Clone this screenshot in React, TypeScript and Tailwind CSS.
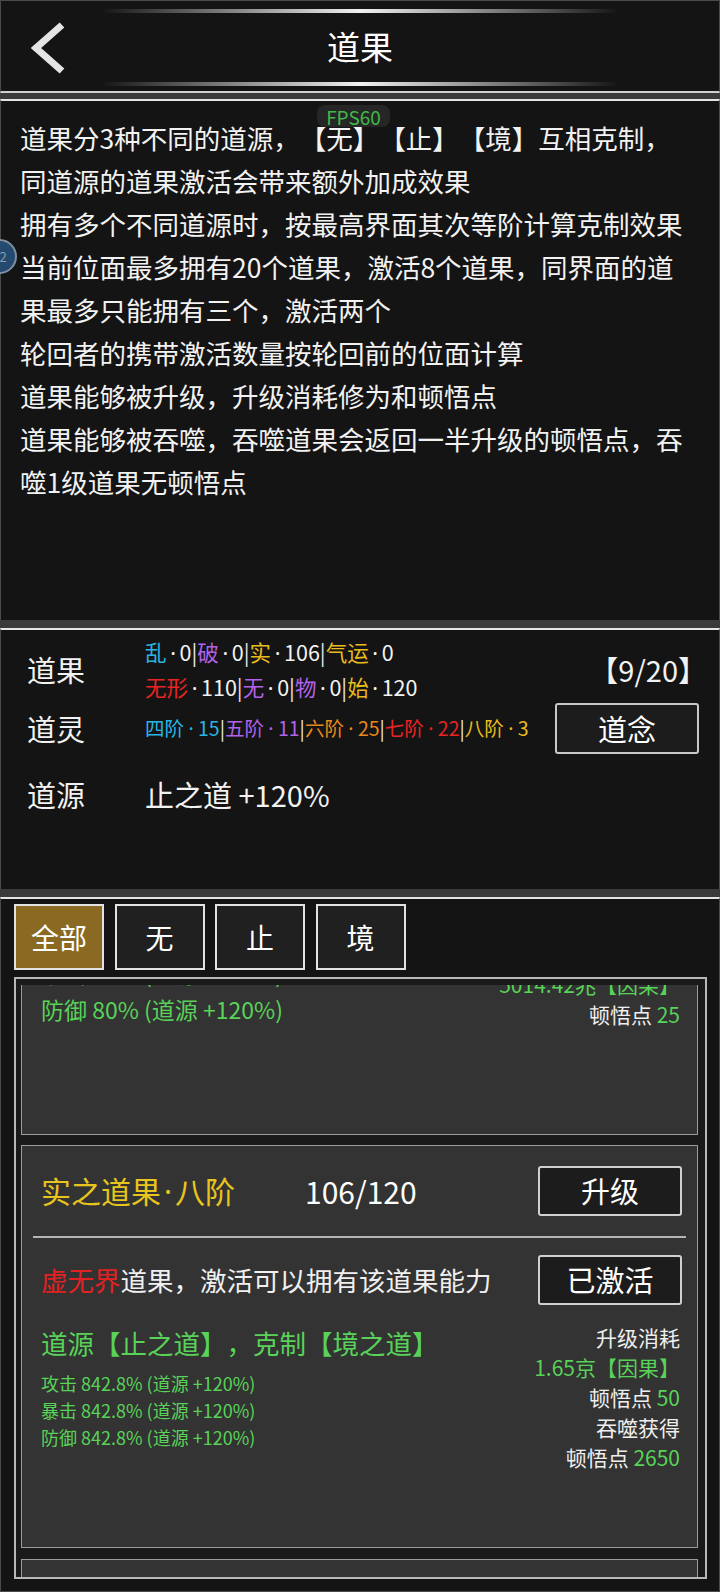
import React from 'react';

const CYAN = 'text-[#2ab4e4]';
const PURPLE = 'text-[#b262ea]';
const GOLD = 'text-[#e8bc1e]';
const RED = 'text-[#e82424]';
const ORANGE = 'text-[#e8891c]';
const GREEN = 'text-[#58d258]';

function Sep() {
  return <span className="text-[#e8e8e8]">|</span>;
}

// narrow middle dot, taken from the latin font (the CJK one draws it full width)
function Dot({ w = 'w-[13px]' }: { w?: string }) {
  return <span className={"inline-block text-center font-['Noto_Sans',sans-serif] " + w}>·</span>;
}

function Header() {
  return (
    <div className="relative h-[93px] bg-[#141414] border border-[#4a4a4a] border-b-2 border-b-[#d0d0d0] flex items-center justify-center">
      {/* top & bottom glow lines */}
      <div className="absolute left-[100px] top-[8px] w-[518px] h-[4px] bg-linear-to-r from-transparent via-[#f2f2f2] to-transparent" />
      <div className="absolute left-[100px] top-[81px] w-[518px] h-[4px] bg-linear-to-r from-transparent via-[#f2f2f2] to-transparent" />
      <svg className="absolute left-[28px] top-[21px]" width="40" height="52" viewBox="0 0 40 52">
        <polyline points="33,3 7,26 33,49" fill="none" stroke="#e4e4e4" strokeWidth="7" />
      </svg>
      <div className="text-[33px] leading-none text-white">道果</div>
    </div>
  );
}

function Description() {
  const lines = [
    '道果分3种不同的道源，【无】【止】【境】互相克制，',
    '同道源的道果激活会带来额外加成效果',
    '拥有多个不同道源时，按最高界面其次等阶计算克制效果',
    '当前位面最多拥有20个道果，激活8个道果，同界面的道',
    '果最多只能拥有三个，激活两个',
    '轮回者的携带激活数量按轮回前的位面计算',
    '道果能够被升级，升级消耗修为和顿悟点',
    '道果能够被吞噬，吞噬道果会返回一半升级的顿悟点，吞',
    '噬1级道果无顿悟点',
  ];
  return (
    <div className="mt-[6px] h-[521px] bg-[#141414] border-x border-[#4a4a4a] border-t-2 border-t-[#e4e4e4] pl-[19px] pt-[15px] text-[26.5px] leading-[43px] text-[#f2f2f2]">
      {lines.map((l, i) => (
        <div key={i} className="whitespace-nowrap">
          {l}
        </div>
      ))}
    </div>
  );
}

function Stats() {
  return (
    <div className="mt-[8px] h-[261px] bg-[#141414] border-x border-[#4a4a4a] border-t-2 border-t-[#e4e4e4] pl-[26px] pr-[20px] pt-[6px] text-[#f2f2f2]">
      <div className="h-[67px] flex items-center">
        <div className="w-[118px] text-[29px]">道果</div>
        <div className="flex-1 text-[21.5px] leading-[33.5px] whitespace-nowrap">
          <div>
            <span className={CYAN}>乱</span><Dot />0<Sep />
            <span className={PURPLE}>破</span><Dot />0<Sep />
            <span className={GOLD}>实</span><Dot />106<Sep />
            <span className={GOLD}>气运</span><Dot />0
          </div>
          <div>
            <span className={RED}>无形</span><Dot />110<Sep />
            <span className={PURPLE}>无</span><Dot />0<Sep />
            <span className={PURPLE}>物</span><Dot />0<Sep />
            <span className={GOLD}>始</span><Dot />120
          </div>
        </div>
        <div className="text-[29px] -mr-[8px]">【9/20】</div>
      </div>
      <div className="h-[51px] flex items-center">
        <div className="w-[118px] text-[29px]">道灵</div>
        <div className="flex-1 text-[19.5px] whitespace-nowrap">
          <span className={CYAN}>四阶<Dot w="w-[14px]" />15</span>
          <Sep />
          <span className={PURPLE}>五阶<Dot w="w-[14px]" />11</span>
          <Sep />
          <span className={ORANGE}>六阶<Dot w="w-[14px]" />25</span>
          <Sep />
          <span className={RED}>七阶<Dot w="w-[14px]" />22</span>
          <Sep />
          <span className={GOLD}>八阶<Dot w="w-[14px]" />3</span>
        </div>
        <button className="w-[144px] h-[51px] bg-[#1c1c1c] border-2 border-[#c8c8c8] rounded-[3px] text-[29px] text-white">
          道念
        </button>
      </div>
      <div className="mt-[21px] h-[40px] flex items-center">
        <div className="w-[118px] text-[29px]">道源</div>
        <div className="text-[29px]">止之道 +120%</div>
      </div>
    </div>
  );
}

function Tab({ label, active }: { label: string; active?: boolean }) {
  return (
    <div
      className={
        'w-[90px] h-[66px] border-2 border-[#e2e2e2] flex items-center justify-center text-[28px] text-white ' +
        (active ? 'bg-[#8a6a22]' : 'bg-[#202020]')
      }
    >
      {label}
    </div>
  );
}

function Btn({ children }: { children: React.ReactNode }) {
  return (
    <div className="w-[144px] h-[50px] bg-[#1c1c1c] border-2 border-[#d0d0d0] rounded-[3px] flex items-center justify-center text-[29px] text-white">
      {children}
    </div>
  );
}

function DaoList() {
  return (
    <div className="mt-[8px] h-[695px] bg-[#141414] border-x border-b border-[#4a4a4a] border-t-2 border-t-[#e4e4e4] pt-[5px]">
      <div className="flex gap-[10.5px] pl-[13px]">
        <Tab label="全部" active />
        <Tab label="无" />
        <Tab label="止" />
        <Tab label="境" />
      </div>
      <div className="mt-[7px] ml-[13px] w-[693px] h-[602px] border-2 border-[#b8b8b8] bg-[#1a1a1a] pt-[6px] pl-[5px] pr-[7px] overflow-hidden flex flex-col">
        {/* scrolled card, top part out of view */}
        <div className="h-[150px] shrink-0 bg-[#333333] border-x border-b border-[#9c9c9c] overflow-hidden flex justify-between items-start pl-[19px] pr-[17px]">
          <div className={GREEN + ' text-[23px] leading-[36px] -mt-[30px]'}>
            <div>暴击 80% (道源 +120%)</div>
            <div>防御 80% (道源 +120%)</div>
          </div>
          <div className="text-right text-[21px] leading-[30px] text-[#eeeeee] -mt-[16px]">
            <div className={GREEN}>5014.42兆【因果】</div>
            <div>
              顿悟点 <span className={GREEN}>25</span>
            </div>
          </div>
        </div>

        <div className="mt-[10px] h-[403px] shrink-0 bg-[#333333] border border-[#9c9c9c]">
          <div className="mt-[20px] h-[50px] flex items-center justify-between pl-[19px] pr-[15px]">
            <div className="flex items-center">
              <div className="w-[264px] text-[30px] text-[#e8c41e] whitespace-nowrap">
                实之道果<Dot w="w-[14px]" />八阶
              </div>
              <div className="text-[30px] text-white">106/120</div>
            </div>
            <Btn>升级</Btn>
          </div>
          <div className="mt-[20px] mx-[11px] h-[2px] bg-[#b4b4b4]" />
          <div className="mt-[17px] h-[50px] flex items-center justify-between pl-[19px] pr-[15px]">
            <div className="text-[26.5px] text-[#f0f0f0]">
              <span className="text-[#e02222]">虚无界</span>道果，激活可以拥有该道果能力
            </div>
            <Btn>已激活</Btn>
          </div>
          <div className="mt-[17px] flex justify-between items-start pl-[19px] pr-[17px]">
            <div className={GREEN}>
              <div className="mt-[3px] text-[26.5px] leading-[36px] whitespace-nowrap">道源【止之道】，克制【境之道】</div>
              <div className="mt-[8.5px] text-[18px] leading-[27px]">
                <div>攻击 842.8% (道源 +120%)</div>
                <div>暴击 842.8% (道源 +120%)</div>
                <div>防御 842.8% (道源 +120%)</div>
              </div>
            </div>
            <div className="text-right text-[21px] leading-[30px] text-[#eeeeee]">
              <div>升级消耗</div>
              <div className={GREEN}>1.65京【因果】</div>
              <div>
                顿悟点 <span className={GREEN}>50</span>
              </div>
              <div>吞噬获得</div>
              <div>
                顿悟点 <span className={GREEN}>2650</span>
              </div>
            </div>
          </div>
        </div>

        <div className="mt-[11px] h-[60px] shrink-0 bg-[#333333] border-x border-t border-[#9c9c9c]" />
      </div>
    </div>
  );
}

export default function App() {
  return (
    <div className="relative w-[720px] h-[1592px] overflow-hidden bg-[#3a3a3a] font-['Noto_Sans_CJK_SC','Noto_Sans',sans-serif] [text-spacing-trim:space-all]">
      <Header />
      <Description />
      <Stats />
      <DaoList />

      {/* debug overlays */}
      <div className="absolute left-[317px] top-[105px] w-[73px] h-[22px] rounded-[8px] bg-[#262626] flex items-center justify-center text-[19px] leading-none text-[#3fb84a]">
        FPS60
      </div>
      <div className="absolute left-[-18px] top-[239px] w-[35px] h-[35px] rounded-full bg-[#244a70] border-2 border-[#7f8fa0] flex items-center justify-center text-[13px] text-[#8a9cb0]">
        22
      </div>
    </div>
  );
}
